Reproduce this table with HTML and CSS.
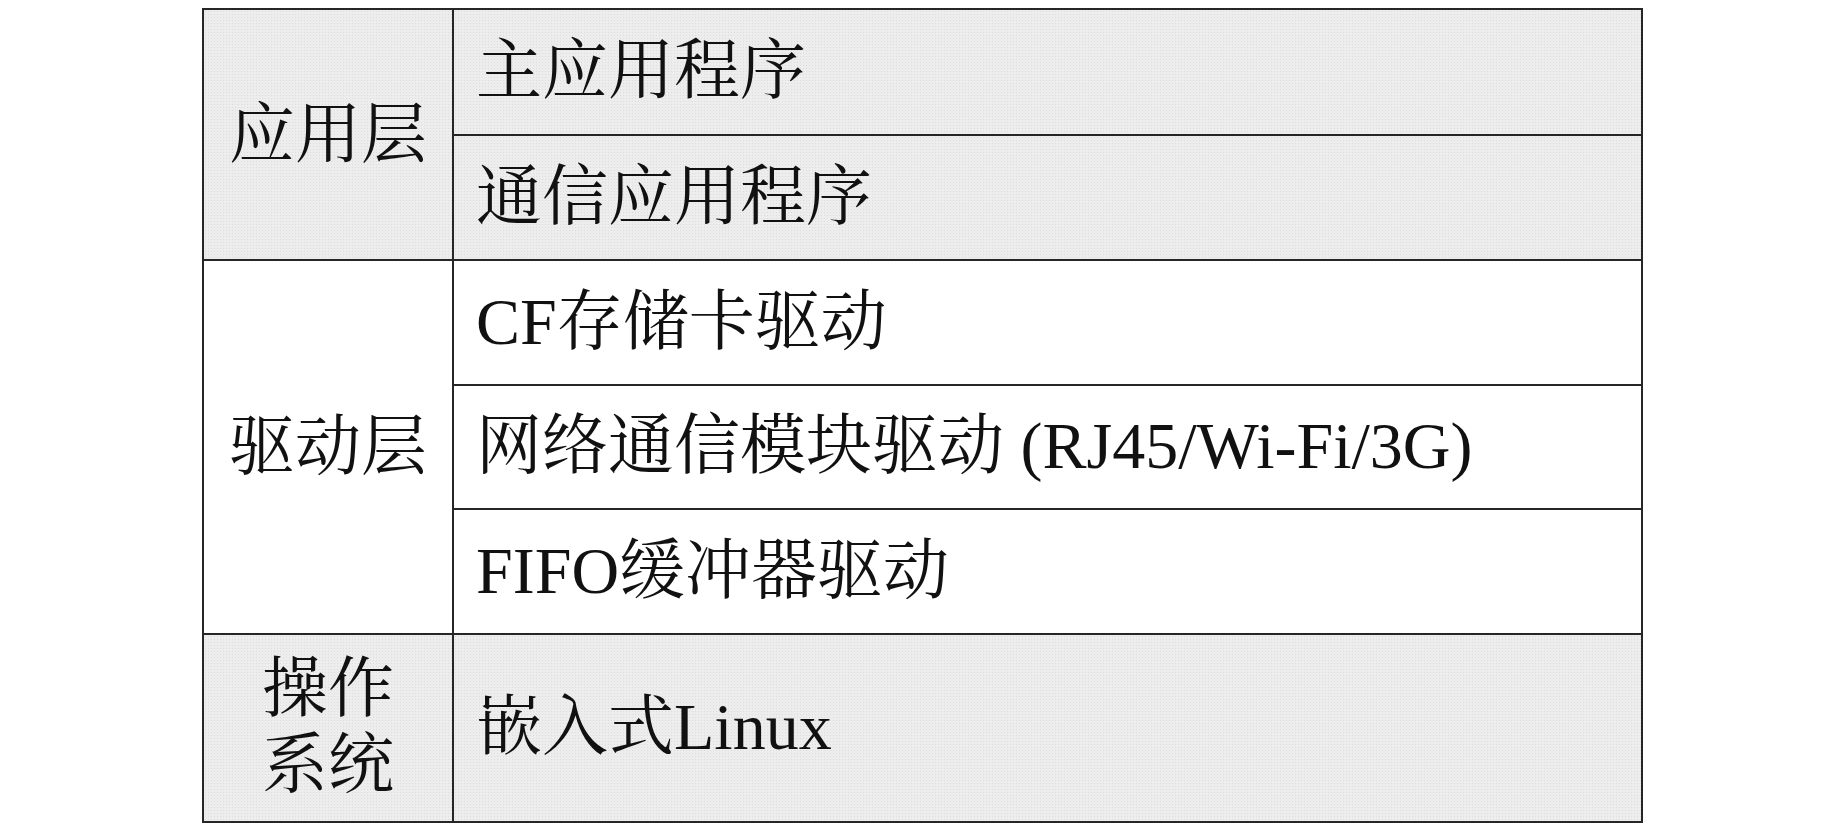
FILE: index.html
```html
<!DOCTYPE html>
<html lang="zh-CN">
<head>
<meta charset="utf-8">
<title>软件层次结构</title>
<link rel="stylesheet" href="styles.css">
</head>
<body>
<div class="sheet">
  <div class="cell layer gray span-app">应用层</div>
  <div class="cell item gray">主应用程序</div>
  <div class="cell item gray">通信应用程序</div>
  <div class="cell layer span-drv">驱动层</div>
  <div class="cell item">CF存储卡驱动</div>
  <div class="cell item">网络通信模块驱动 (RJ45/Wi-Fi/3G)</div>
  <div class="cell item">FIFO缓冲器驱动</div>
  <div class="cell layer gray os">操作<br>系统</div>
  <div class="cell item gray">嵌入式Linux</div>
</div>
</body>
</html>
```

FILE: styles.css
```css
html, body {
  margin: 0;
  padding: 0;
  background: #ffffff;
}

body {
  font-family: "Liberation Serif", "Noto Serif CJK SC", "Noto Sans CJK SC", serif;
  color: #111111;
}

.sheet {
  margin: 8px 0 0 202px;
  width: 1441px;
  box-sizing: border-box;
  border-top: 2px solid #262626;
  border-left: 2px solid #262626;
  display: grid;
  grid-template-columns: 250px 1189px;
  grid-template-rows: 126px 125px 125px 124px 125px 188px;
}

.cell {
  box-sizing: border-box;
  border-right: 2px solid #262626;
  border-bottom: 2px solid #262626;
  display: flex;
  align-items: center;
  font-size: 66px;
  line-height: 1;
  white-space: nowrap;
}

.gray {
  background-color: #ededed;
  background-image: radial-gradient(circle, #dcdcdc 0.7px, transparent 0.9px);
  background-size: 3px 3px;
}

.layer {
  grid-column: 1;
  justify-content: center;
  text-align: center;
}

.span-app {
  grid-row: 1 / span 2;
}

.span-drv {
  grid-row: 3 / span 3;
}

.os {
  grid-row: 6;
  line-height: 76px;
  padding-bottom: 2px;
}

.item {
  grid-column: 2;
  padding-left: 22px;
  padding-bottom: 2px;
}
```
